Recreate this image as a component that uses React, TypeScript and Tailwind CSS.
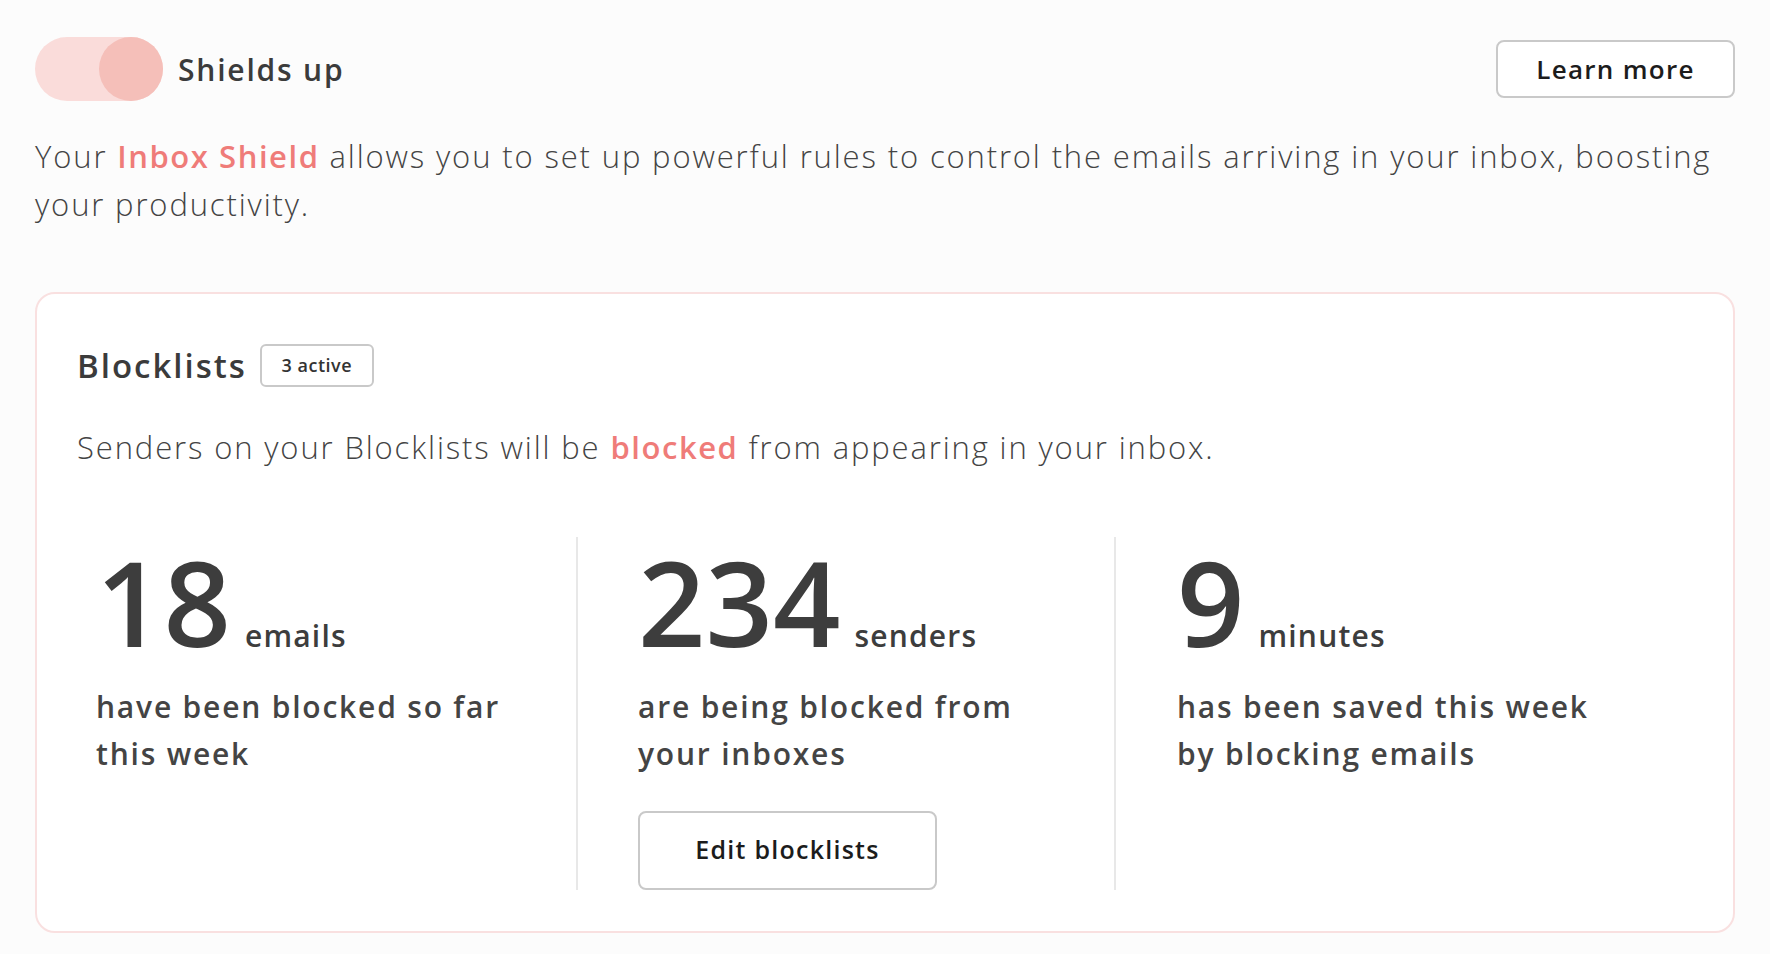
import React from 'react';

const Stat = ({
  value,
  unit,
  lines,
  children,
}: {
  value: string;
  unit: string;
  lines: string[];
  children?: React.ReactNode;
}) => (
  <div className="flex flex-col pt-[6px]">
    <div className="flex items-baseline">
      <span className="text-[118px] leading-none font-semibold text-[#3d3d3d]">{value}</span>
      <span className="ml-[14px] text-[30px] font-semibold tracking-[0.04em] text-[#3d3d3d]">{unit}</span>
    </div>
    <p className="mt-[22px] text-[30px] leading-[47px] font-semibold tracking-[0.06em] text-[#444444]">
      {lines[0]}
      <br />
      {lines[1]}
    </p>
    {children}
  </div>
);

const App = () => {
  return (
    <div className="min-h-screen bg-[#fcfcfc] px-[35px] pt-[37px] pb-[22px] font-['Open_Sans',sans-serif] text-[#3d3d3d]">
      {/* Header */}
      <div className="flex items-center justify-between">
        <div className="flex items-center">
          <div className="flex justify-end w-[128px] h-[64px] rounded-full bg-[#fadcda]">
            <div className="w-[64px] h-[64px] rounded-full bg-[#f5bfb9]"></div>
          </div>
          <span className="ml-[15px] text-[30px] font-semibold tracking-[0.06em] text-[#3b3b3b]">Shields up</span>
        </div>
        <button className="w-[239px] h-[58px] border-2 border-[#c9c9c9] rounded-[8px] bg-white text-[26px] font-semibold tracking-[0.05em] text-[#1c1c1c]">
          Learn more
        </button>
      </div>

      <p className="mt-[31px] text-[31px] leading-[48px] font-light tracking-[0.06em] text-[#444444]">
        Your <span className="font-semibold tracking-[0.05em] text-[#ef7c79]">Inbox Shield</span> allows you to set up
        powerful rules to control the emails arriving in your inbox, boosting your productivity.
      </p>

      {/* Blocklists card */}
      <div className="mt-[64px] bg-white border-2 border-[#f9e0e0] rounded-[20px] px-[40px] pt-[47px] pb-[41px]">
        <div className="flex items-center">
          <h2 className="text-[33px] font-semibold tracking-[0.06em] text-[#3b3b3b]">Blocklists</h2>
          <span className="ml-[13px] flex items-center justify-center w-[114px] h-[43px] border-2 border-[#c9c9c9] rounded-[6px] text-[18px] font-semibold tracking-[0.03em] text-[#333333]">
            3 active
          </span>
        </div>
        <p className="mt-[32px] text-[31px] leading-[48px] font-light tracking-[0.06em] text-[#444444]">
          Senders on your Blocklists will be{' '}
          <span className="font-semibold tracking-[0.05em] text-[#ef7c79]">blocked</span> from appearing in your inbox.
        </p>

        <div className="mt-[66px] grid grid-cols-[499px_538px_1fr]">
          <div className="pl-[19px]">
            <Stat value="18" unit="emails" lines={['have been blocked so far', 'this week']} />
          </div>
          <div className="border-l-2 border-[#e8e8e8] pl-[60px]">
            <Stat value="234" unit="senders" lines={['are being blocked from', 'your inboxes']}>
              <button className="mt-[34px] w-[299px] h-[79px] border-2 border-[#c9c9c9] rounded-[8px] bg-white text-[25px] font-semibold tracking-[0.05em] text-[#1c1c1c]">
                Edit blocklists
              </button>
            </Stat>
          </div>
          <div className="border-l-2 border-[#e8e8e8] pl-[61px]">
            <Stat value="9" unit="minutes" lines={['has been saved this week', 'by blocking emails']} />
          </div>
        </div>
      </div>
    </div>
  );
};

export default App;
